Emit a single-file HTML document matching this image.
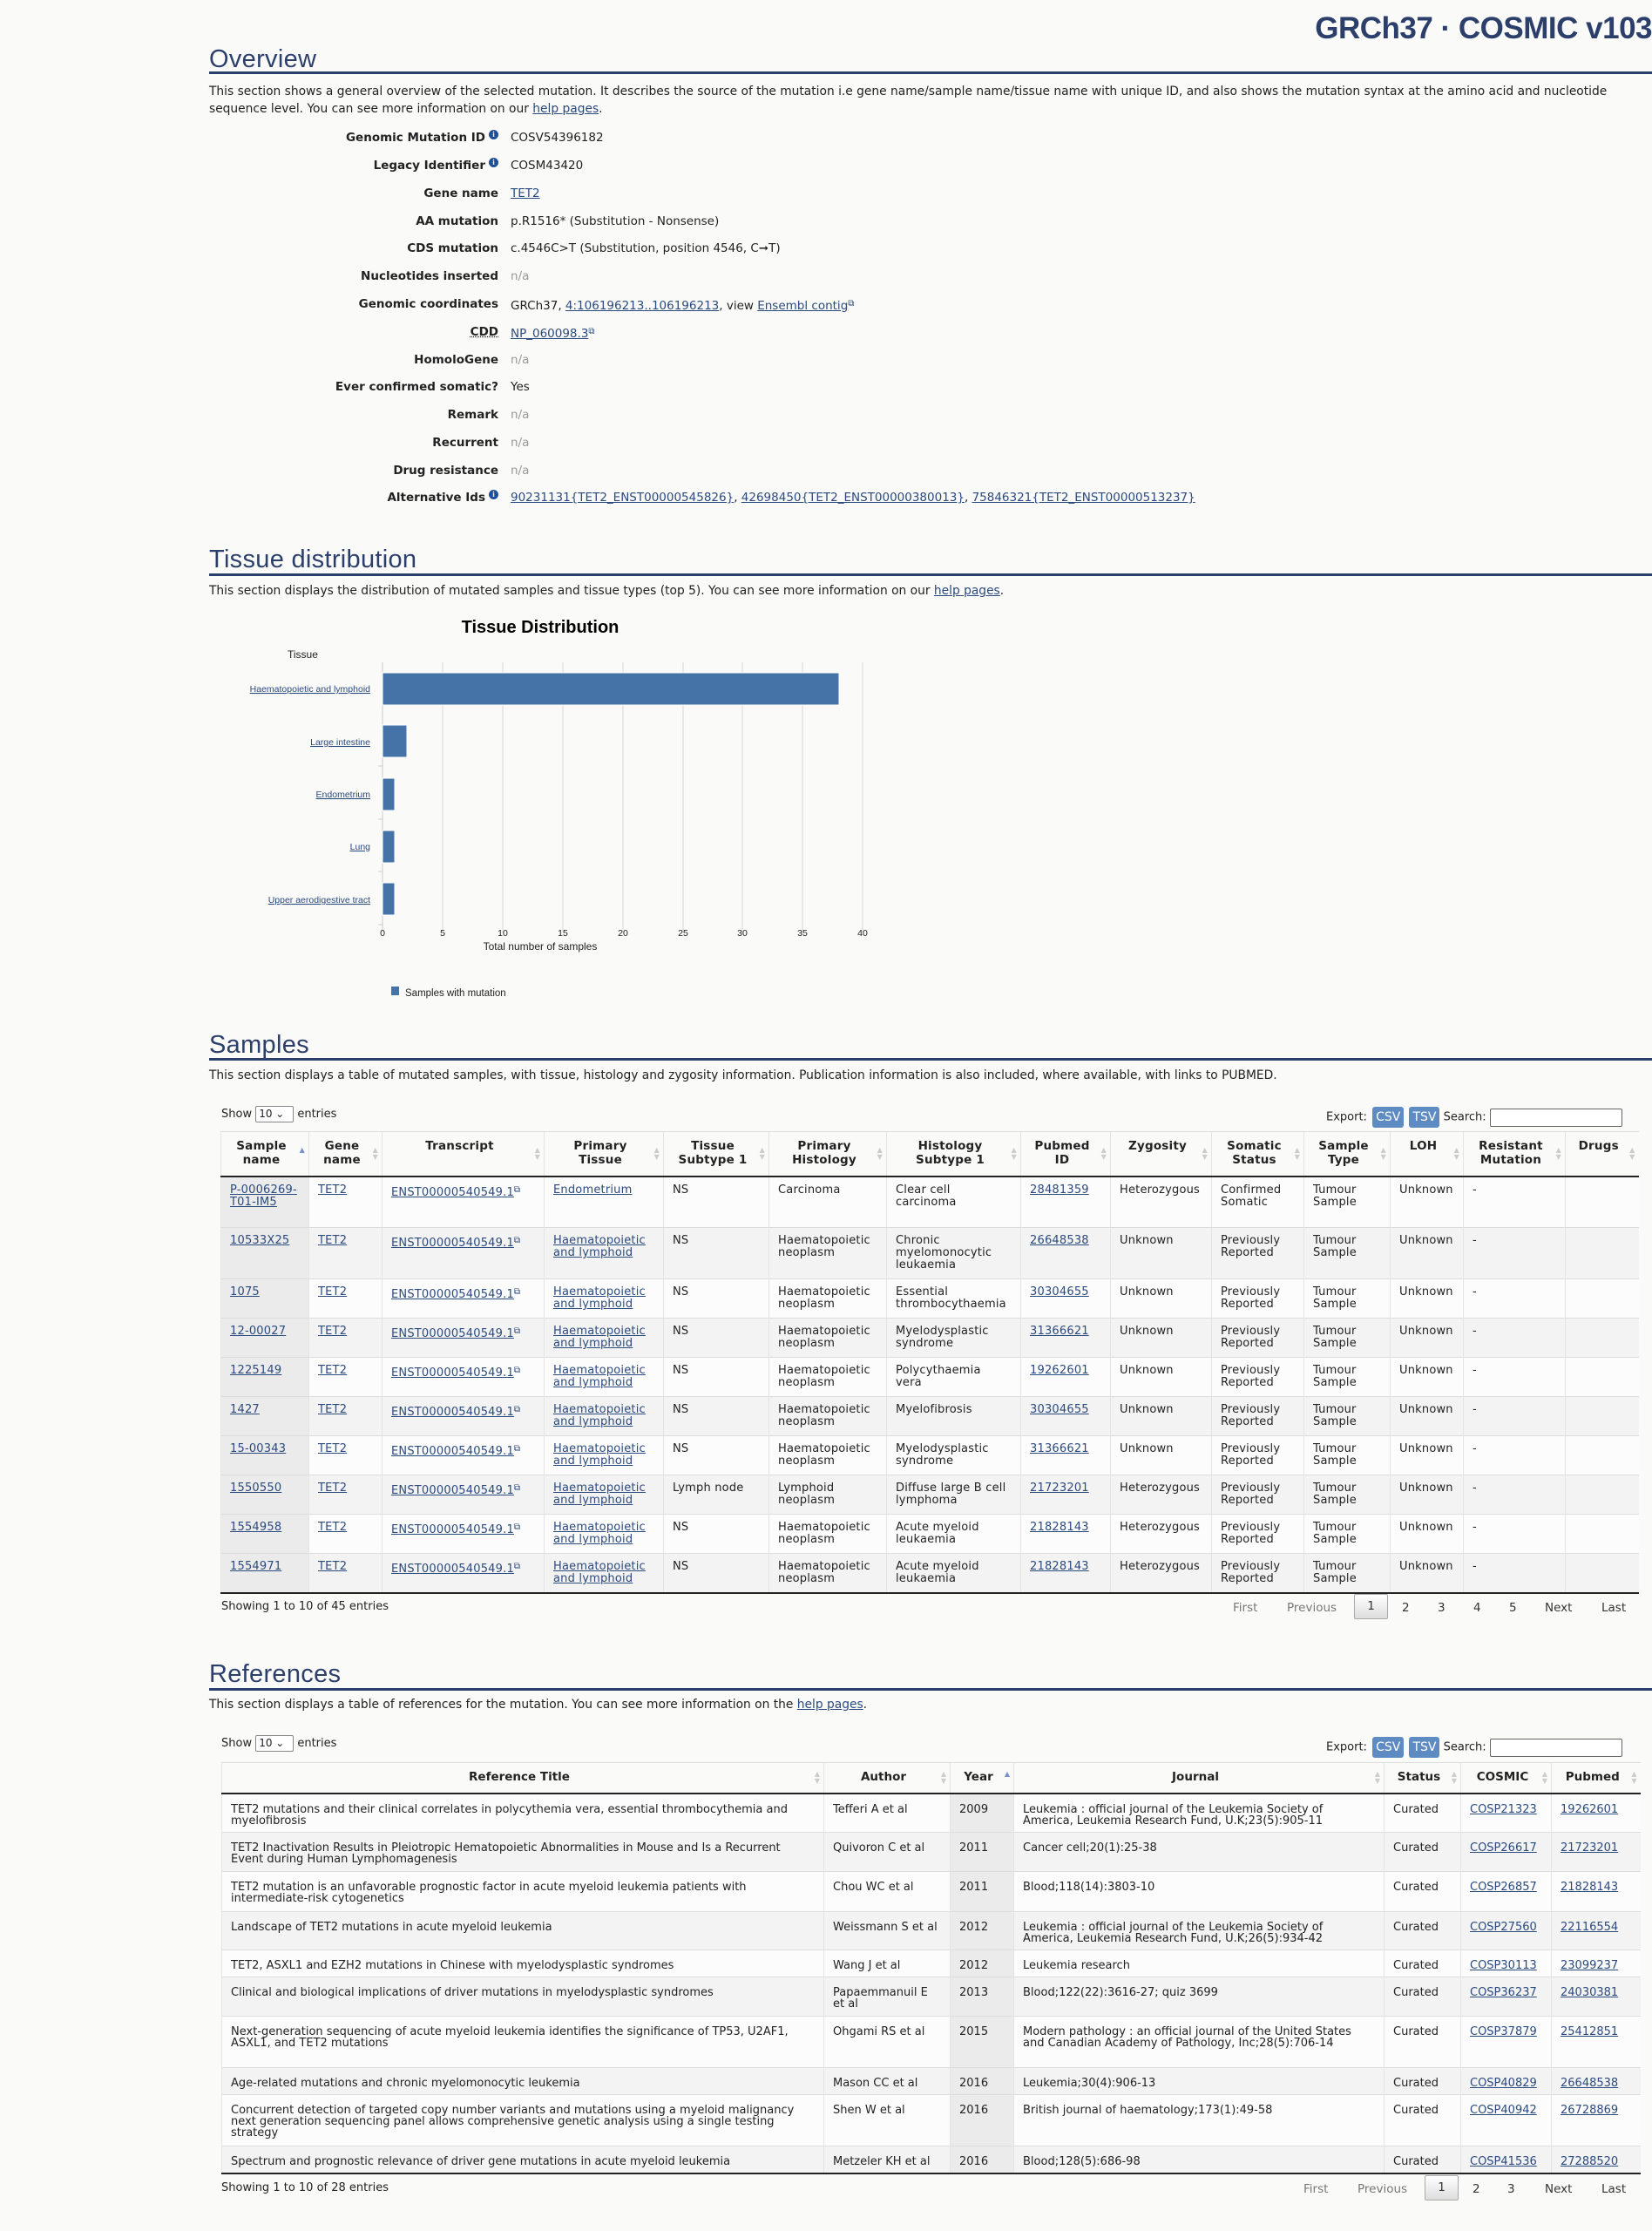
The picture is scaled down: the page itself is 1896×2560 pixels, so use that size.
<!DOCTYPE html>
<html><head><meta charset="utf-8">
<style>
*{box-sizing:border-box;margin:0;padding:0}
html,body{width:1896px;height:2560px;background:#fafaf9;overflow:hidden}
body{position:relative;font-family:"DejaVu Sans","Liberation Sans",sans-serif;font-size:14px;color:#222}
a{color:#2b4a7e;text-decoration:underline}
.abs{position:absolute}
.h2{position:absolute;left:240px;font-family:"Liberation Sans",sans-serif;font-size:29px;color:#2c3f6b;letter-spacing:0.3px}
.rule{position:absolute;left:240px;right:0;height:3px;background:#2c3f6b}
.txt{position:absolute;left:240px;width:1645px;font-size:13.8px;line-height:20px;color:#222}
.ov{position:absolute;left:0;width:1000px;height:32px;line-height:32px;font-size:13.5px}
.ov .l{position:absolute;right:calc(1000px - 572px);font-weight:bold;text-align:right;white-space:nowrap}
.ov .v{position:absolute;left:586px;white-space:nowrap}
.na{color:#999}
.i{display:inline-block;width:11px;height:11px;border-radius:50%;background:#1f4e9a;color:#fff;font-size:9px;line-height:11px;text-align:center;font-weight:bold;vertical-align:5px;margin-left:4px;font-family:"Liberation Serif",serif}
.ext{font-size:10px;vertical-align:4px;color:#2b4a7e}
table{border-collapse:collapse;table-layout:fixed;position:absolute}
td,th{border-left:1px solid #e4e4e4;vertical-align:top;overflow:hidden}
th{font-weight:bold;text-align:center;position:relative;border-top:1px solid #ddd;border-bottom:2px solid #222}
th .s{position:absolute;right:4px;top:50%;margin-top:-8px;font-size:8px;line-height:8px;color:#ccc}
tr:nth-child(odd) td{background:#f3f3f3}
tr:nth-child(even) td{background:#fcfcfc}
#st{left:253px;top:1298px;width:1627px;font-size:13px;line-height:14px;letter-spacing:0.2px}
#st th{height:51px;padding:8px 16px 0 8px;line-height:16px;vertical-align:top;font-size:13.5px}
#st td{padding:8px 12px 0 10px;border-top:1px solid #ddd}
#st tr.t td{height:59px}#st tr.w td{height:45px}
#st td.c{background:#ebebeb}
#rt{left:254px;top:2022px;width:1628px;font-size:13px;line-height:13px}
#rt th{height:35px;padding:0 14px 0 6px;vertical-align:middle;font-size:13.5px}
#rt td{padding:11px 10px 0;border-top:1px solid #ddd}
#rt td.c{background:#ebebeb}
.tbot{border-bottom:2px solid #222}
.ctl{position:absolute;font-size:13px}
sel{display:inline-block;border:1px solid #888;border-radius:2px;width:44px;height:19px;line-height:17px;font-size:12px;padding-left:3px;vertical-align:middle;background:#fff}
.btn{display:inline-block;background:#5e8cc2;color:#fff;border-radius:3px;padding:0 4px;height:24px;line-height:24px;font-size:14px;vertical-align:middle;margin-left:2px}
.sb{display:inline-block;width:152px;height:21px;border:1px solid #666;border-radius:2px;background:#fff;vertical-align:middle;margin-left:4px}
.pg{position:absolute;font-size:13.5px;color:#333}
.pg span{position:absolute;top:0;white-space:nowrap}
.pg .g{color:#777}
.pg .cur{border:1px solid #aaa;border-radius:2px;background:linear-gradient(#fff,#ddd);width:39px;height:29px;text-align:center;line-height:27px;top:-8px}
</style></head><body>

<div class="abs" style="right:0;top:13px;font-family:'Liberation Sans',sans-serif;font-size:35px;font-weight:bold;color:#2c3f6b;white-space:nowrap;letter-spacing:-0.5px">GRCh37 · COSMIC v103</div>

<div class="h2" style="top:52px">Overview</div>
<div class="rule" style="top:82px"></div>
<div class="txt" style="top:95px">This section shows a general overview of the selected mutation. It describes the source of the mutation i.e gene name/sample name/tissue name with unique ID, and also shows the mutation syntax at the amino acid and nucleotide sequence level. You can see more information on our <a>help pages</a>.</div>

<div class="ov" style="top:142px"><span class="l">Genomic Mutation ID<span class="i">i</span></span><span class="v">COSV54396182</span></div>
<div class="ov" style="top:174px"><span class="l">Legacy Identifier<span class="i">i</span></span><span class="v">COSM43420</span></div>
<div class="ov" style="top:206px"><span class="l">Gene name</span><span class="v"><a>TET2</a></span></div>
<div class="ov" style="top:238px"><span class="l">AA mutation</span><span class="v">p.R1516* (Substitution - Nonsense)</span></div>
<div class="ov" style="top:269px"><span class="l">CDS mutation</span><span class="v">c.4546C&gt;T (Substitution, position 4546, C➞T)</span></div>
<div class="ov" style="top:301px"><span class="l">Nucleotides inserted</span><span class="v na">n/a</span></div>
<div class="ov" style="top:333px"><span class="l">Genomic coordinates</span><span class="v">GRCh37, <a>4:106196213..106196213</a>, view <a>Ensembl contig</a><span class="ext">⧉</span></span></div>
<div class="ov" style="top:365px"><span class="l" style="text-decoration:underline dotted">CDD</span><span class="v"><a>NP_060098.3</a><span class="ext">⧉</span></span></div>
<div class="ov" style="top:397px"><span class="l">HomoloGene</span><span class="v na">n/a</span></div>
<div class="ov" style="top:428px"><span class="l">Ever confirmed somatic?</span><span class="v">Yes</span></div>
<div class="ov" style="top:460px"><span class="l">Remark</span><span class="v na">n/a</span></div>
<div class="ov" style="top:492px"><span class="l">Recurrent</span><span class="v na">n/a</span></div>
<div class="ov" style="top:524px"><span class="l">Drug resistance</span><span class="v na">n/a</span></div>
<div class="ov" style="top:555px"><span class="l">Alternative Ids<span class="i">i</span></span><span class="v"><a>90231131{TET2_ENST00000545826}</a>, <a>42698450{TET2_ENST00000380013}</a>, <a>75846321{TET2_ENST00000513237}</a></span></div>

<div class="h2" style="top:626px">Tissue distribution</div>
<div class="rule" style="top:658px"></div>
<div class="txt" style="top:668px">This section displays the distribution of mutated samples and tissue types (top 5). You can see more information on our <a>help pages</a>.</div>

<svg class="abs" style="left:0;top:690px" width="1100" height="470" font-family="Liberation Sans, sans-serif">
 <text x="620" y="36" font-size="20" font-weight="bold" text-anchor="middle" fill="#000">Tissue Distribution</text>
 <text x="330" y="65" font-size="12" fill="#222">Tissue</text>
 <g stroke="#d8d8d8" stroke-width="1">
  <line x1="508" y1="70" x2="508" y2="380"/><line x1="577" y1="70" x2="577" y2="380"/><line x1="646" y1="70" x2="646" y2="380"/><line x1="715" y1="70" x2="715" y2="380"/><line x1="784" y1="70" x2="784" y2="380"/><line x1="852" y1="70" x2="852" y2="380"/><line x1="921" y1="70" x2="921" y2="380"/><line x1="990" y1="70" x2="990" y2="380"/>
 </g>
 <line x1="439" y1="70" x2="439" y2="380" stroke="#ccc"/>
 <g stroke="#ccc"><line x1="434" y1="189" x2="439" y2="189"/><line x1="434" y1="250" x2="439" y2="250"/><line x1="434" y1="310" x2="439" y2="310"/><line x1="434" y1="371" x2="439" y2="371"/></g>
 <g fill="#4572a7" stroke="#fff" stroke-width="1">
  <rect x="439" y="82" width="524" height="37"/>
  <rect x="439" y="142" width="28" height="37"/>
  <rect x="439" y="203" width="14" height="37"/>
  <rect x="439" y="263" width="14" height="37"/>
  <rect x="439" y="323" width="14" height="37"/>
 </g>
 <g font-size="10.5" fill="#2b4a7e" text-anchor="end" text-decoration="underline">
  <text x="425" y="104">Haematopoietic and lymphoid</text>
  <text x="425" y="165">Large intestine</text>
  <text x="425" y="225">Endometrium</text>
  <text x="425" y="285">Lung</text>
  <text x="425" y="346">Upper aerodigestive tract</text>
 </g>
 <g font-size="10.5" fill="#222" text-anchor="middle">
  <text x="439" y="384">0</text><text x="508" y="384">5</text><text x="577" y="384">10</text><text x="646" y="384">15</text><text x="715" y="384">20</text><text x="784" y="384">25</text><text x="852" y="384">30</text><text x="921" y="384">35</text><text x="990" y="384">40</text>
  <text x="620" y="400" font-size="12">Total number of samples</text>
 </g>
 <rect x="449" y="442" width="9" height="10" fill="#4572a7"/>
 <text x="465" y="453" font-size="11.5" fill="#222">Samples with mutation</text>
</svg>

<div class="h2" style="top:1183px">Samples</div>
<div class="rule" style="top:1214px"></div>
<div class="txt" style="top:1224px">This section displays a table of mutated samples, with tissue, histology and zygosity information. Publication information is also included, where available, with links to PUBMED.</div>

<div class="ctl" style="left:254px;top:1269px">Show <sel>10 ⌄</sel> entries</div>
<div class="ctl" style="left:1522px;top:1270px">Export: <span class="btn">CSV</span> <span class="btn">TSV</span> Search:<span class="sb"></span></div>

<table id="st" class="tbot">
<colgroup><col style="width:101px"><col style="width:84px"><col style="width:186px"><col style="width:137px"><col style="width:121px"><col style="width:135px"><col style="width:154px"><col style="width:103px"><col style="width:116px"><col style="width:106px"><col style="width:99px"><col style="width:84px"><col style="width:117px"><col style="width:84px"></colgroup>
<tr><th>Sample name<span class="s" style="color:#7a8fd0">▲</span></th><th>Gene name<span class="s">▲<br>▼</span></th><th>Transcript<span class="s">▲<br>▼</span></th><th>Primary Tissue<span class="s">▲<br>▼</span></th><th>Tissue Subtype 1<span class="s">▲<br>▼</span></th><th>Primary Histology<span class="s">▲<br>▼</span></th><th>Histology Subtype 1<span class="s">▲<br>▼</span></th><th>Pubmed ID<span class="s">▲<br>▼</span></th><th>Zygosity<span class="s">▲<br>▼</span></th><th>Somatic Status<span class="s">▲<br>▼</span></th><th>Sample Type<span class="s">▲<br>▼</span></th><th>LOH<span class="s">▲<br>▼</span></th><th>Resistant Mutation<span class="s">▲<br>▼</span></th><th>Drugs<span class="s">▲<br>▼</span></th></tr>
<tr class="t"><td class="c"><a>P-0006269-T01-IM5</a></td><td><a>TET2</a></td><td><a>ENST00000540549.1</a><span class="ext">⧉</span></td><td><a>Endometrium</a></td><td>NS</td><td>Carcinoma</td><td>Clear cell carcinoma</td><td><a>28481359</a></td><td>Heterozygous</td><td>Confirmed Somatic</td><td>Tumour Sample</td><td>Unknown</td><td>-</td><td></td></tr>
<tr class="t"><td class="c"><a>10533X25</a></td><td><a>TET2</a></td><td><a>ENST00000540549.1</a><span class="ext">⧉</span></td><td><a>Haematopoietic and lymphoid</a></td><td>NS</td><td>Haematopoietic neoplasm</td><td>Chronic myelomonocytic leukaemia</td><td><a>26648538</a></td><td>Unknown</td><td>Previously Reported</td><td>Tumour Sample</td><td>Unknown</td><td>-</td><td></td></tr>
<tr class="w"><td class="c"><a>1075</a></td><td><a>TET2</a></td><td><a>ENST00000540549.1</a><span class="ext">⧉</span></td><td><a>Haematopoietic and lymphoid</a></td><td>NS</td><td>Haematopoietic neoplasm</td><td>Essential thrombocythaemia</td><td><a>30304655</a></td><td>Unknown</td><td>Previously Reported</td><td>Tumour Sample</td><td>Unknown</td><td>-</td><td></td></tr>
<tr class="w"><td class="c"><a>12-00027</a></td><td><a>TET2</a></td><td><a>ENST00000540549.1</a><span class="ext">⧉</span></td><td><a>Haematopoietic and lymphoid</a></td><td>NS</td><td>Haematopoietic neoplasm</td><td>Myelodysplastic syndrome</td><td><a>31366621</a></td><td>Unknown</td><td>Previously Reported</td><td>Tumour Sample</td><td>Unknown</td><td>-</td><td></td></tr>
<tr class="w"><td class="c"><a>1225149</a></td><td><a>TET2</a></td><td><a>ENST00000540549.1</a><span class="ext">⧉</span></td><td><a>Haematopoietic and lymphoid</a></td><td>NS</td><td>Haematopoietic neoplasm</td><td>Polycythaemia vera</td><td><a>19262601</a></td><td>Unknown</td><td>Previously Reported</td><td>Tumour Sample</td><td>Unknown</td><td>-</td><td></td></tr>
<tr class="w"><td class="c"><a>1427</a></td><td><a>TET2</a></td><td><a>ENST00000540549.1</a><span class="ext">⧉</span></td><td><a>Haematopoietic and lymphoid</a></td><td>NS</td><td>Haematopoietic neoplasm</td><td>Myelofibrosis</td><td><a>30304655</a></td><td>Unknown</td><td>Previously Reported</td><td>Tumour Sample</td><td>Unknown</td><td>-</td><td></td></tr>
<tr class="w"><td class="c"><a>15-00343</a></td><td><a>TET2</a></td><td><a>ENST00000540549.1</a><span class="ext">⧉</span></td><td><a>Haematopoietic and lymphoid</a></td><td>NS</td><td>Haematopoietic neoplasm</td><td>Myelodysplastic syndrome</td><td><a>31366621</a></td><td>Unknown</td><td>Previously Reported</td><td>Tumour Sample</td><td>Unknown</td><td>-</td><td></td></tr>
<tr class="w"><td class="c"><a>1550550</a></td><td><a>TET2</a></td><td><a>ENST00000540549.1</a><span class="ext">⧉</span></td><td><a>Haematopoietic and lymphoid</a></td><td>Lymph node</td><td>Lymphoid neoplasm</td><td>Diffuse large B cell lymphoma</td><td><a>21723201</a></td><td>Heterozygous</td><td>Previously Reported</td><td>Tumour Sample</td><td>Unknown</td><td>-</td><td></td></tr>
<tr class="w"><td class="c"><a>1554958</a></td><td><a>TET2</a></td><td><a>ENST00000540549.1</a><span class="ext">⧉</span></td><td><a>Haematopoietic and lymphoid</a></td><td>NS</td><td>Haematopoietic neoplasm</td><td>Acute myeloid leukaemia</td><td><a>21828143</a></td><td>Heterozygous</td><td>Previously Reported</td><td>Tumour Sample</td><td>Unknown</td><td>-</td><td></td></tr>
<tr class="w"><td class="c"><a>1554971</a></td><td><a>TET2</a></td><td><a>ENST00000540549.1</a><span class="ext">⧉</span></td><td><a>Haematopoietic and lymphoid</a></td><td>NS</td><td>Haematopoietic neoplasm</td><td>Acute myeloid leukaemia</td><td><a>21828143</a></td><td>Heterozygous</td><td>Previously Reported</td><td>Tumour Sample</td><td>Unknown</td><td>-</td><td></td></tr>
</table>

<div class="ctl" style="left:254px;top:1836px">Showing 1 to 10 of 45 entries</div>
<div class="pg" style="left:0;top:1837px;width:1896px">
 <span class="g" style="left:1415px">First</span><span class="g" style="left:1477px">Previous</span><span class="cur" style="left:1554px">1</span><span style="left:1609px">2</span><span style="left:1650px">3</span><span style="left:1691px">4</span><span style="left:1732px">5</span><span style="left:1773px">Next</span><span style="left:1838px">Last</span>
</div>

<div class="h2" style="top:1905px">References</div>
<div class="rule" style="top:1937px"></div>
<div class="txt" style="top:1946px">This section displays a table of references for the mutation. You can see more information on the <a>help pages</a>.</div>

<div class="ctl" style="left:254px;top:1991px">Show <sel>10 ⌄</sel> entries</div>
<div class="ctl" style="left:1522px;top:1993px">Export: <span class="btn">CSV</span> <span class="btn">TSV</span> Search:<span class="sb"></span></div>

<table id="rt" class="tbot">
<colgroup><col style="width:691px"><col style="width:145px"><col style="width:73px"><col style="width:425px"><col style="width:88px"><col style="width:104px"><col style="width:102px"></colgroup>
<tr><th>Reference Title<span class="s">▲<br>▼</span></th><th>Author<span class="s">▲<br>▼</span></th><th>Year<span class="s" style="color:#7a8fd0">▲</span></th><th>Journal<span class="s">▲<br>▼</span></th><th>Status<span class="s">▲<br>▼</span></th><th>COSMIC<span class="s">▲<br>▼</span></th><th>Pubmed<span class="s">▲<br>▼</span></th></tr>
<tr style="height:45px"><td>TET2 mutations and their clinical correlates in polycythemia vera, essential thrombocythemia and myelofibrosis</td><td>Tefferi A et al</td><td class="c">2009</td><td>Leukemia : official journal of the Leukemia Society of America, Leukemia Research Fund, U.K;23(5):905-11</td><td>Curated</td><td><a>COSP21323</a></td><td><a>19262601</a></td></tr>
<tr style="height:45px"><td>TET2 Inactivation Results in Pleiotropic Hematopoietic Abnormalities in Mouse and Is a Recurrent Event during Human Lymphomagenesis</td><td>Quivoron C et al</td><td class="c">2011</td><td>Cancer cell;20(1):25-38</td><td>Curated</td><td><a>COSP26617</a></td><td><a>21723201</a></td></tr>
<tr style="height:46px"><td>TET2 mutation is an unfavorable prognostic factor in acute myeloid leukemia patients with intermediate-risk cytogenetics</td><td>Chou WC et al</td><td class="c">2011</td><td>Blood;118(14):3803-10</td><td>Curated</td><td><a>COSP26857</a></td><td><a>21828143</a></td></tr>
<tr style="height:44px"><td>Landscape of TET2 mutations in acute myeloid leukemia</td><td>Weissmann S et al</td><td class="c">2012</td><td>Leukemia : official journal of the Leukemia Society of America, Leukemia Research Fund, U.K;26(5):934-42</td><td>Curated</td><td><a>COSP27560</a></td><td><a>22116554</a></td></tr>
<tr style="height:31px"><td>TET2, ASXL1 and EZH2 mutations in Chinese with myelodysplastic syndromes</td><td>Wang J et al</td><td class="c">2012</td><td>Leukemia research</td><td>Curated</td><td><a>COSP30113</a></td><td><a>23099237</a></td></tr>
<tr style="height:45px"><td>Clinical and biological implications of driver mutations in myelodysplastic syndromes</td><td>Papaemmanuil E et al</td><td class="c">2013</td><td>Blood;122(22):3616-27; quiz 3699</td><td>Curated</td><td><a>COSP36237</a></td><td><a>24030381</a></td></tr>
<tr style="height:59px"><td>Next-generation sequencing of acute myeloid leukemia identifies the significance of TP53, U2AF1, ASXL1, and TET2 mutations</td><td>Ohgami RS et al</td><td class="c">2015</td><td>Modern pathology : an official journal of the United States and Canadian Academy of Pathology, Inc;28(5):706-14</td><td>Curated</td><td><a>COSP37879</a></td><td><a>25412851</a></td></tr>
<tr style="height:31px"><td>Age-related mutations and chronic myelomonocytic leukemia</td><td>Mason CC et al</td><td class="c">2016</td><td>Leukemia;30(4):906-13</td><td>Curated</td><td><a>COSP40829</a></td><td><a>26648538</a></td></tr>
<tr style="height:59px"><td>Concurrent detection of targeted copy number variants and mutations using a myeloid malignancy next generation sequencing panel allows comprehensive genetic analysis using a single testing strategy</td><td>Shen W et al</td><td class="c">2016</td><td>British journal of haematology;173(1):49-58</td><td>Curated</td><td><a>COSP40942</a></td><td><a>26728869</a></td></tr>
<tr style="height:31px"><td>Spectrum and prognostic relevance of driver gene mutations in acute myeloid leukemia</td><td>Metzeler KH et al</td><td class="c">2016</td><td>Blood;128(5):686-98</td><td>Curated</td><td><a>COSP41536</a></td><td><a>27288520</a></td></tr>
</table>

<div class="ctl" style="left:254px;top:2503px">Showing 1 to 10 of 28 entries</div>
<div class="pg" style="left:0;top:2504px;width:1896px">
 <span class="g" style="left:1496px">First</span><span class="g" style="left:1558px">Previous</span><span class="cur" style="left:1635px">1</span><span style="left:1690px">2</span><span style="left:1730px">3</span><span style="left:1773px">Next</span><span style="left:1838px">Last</span>
</div>

</body></html>
